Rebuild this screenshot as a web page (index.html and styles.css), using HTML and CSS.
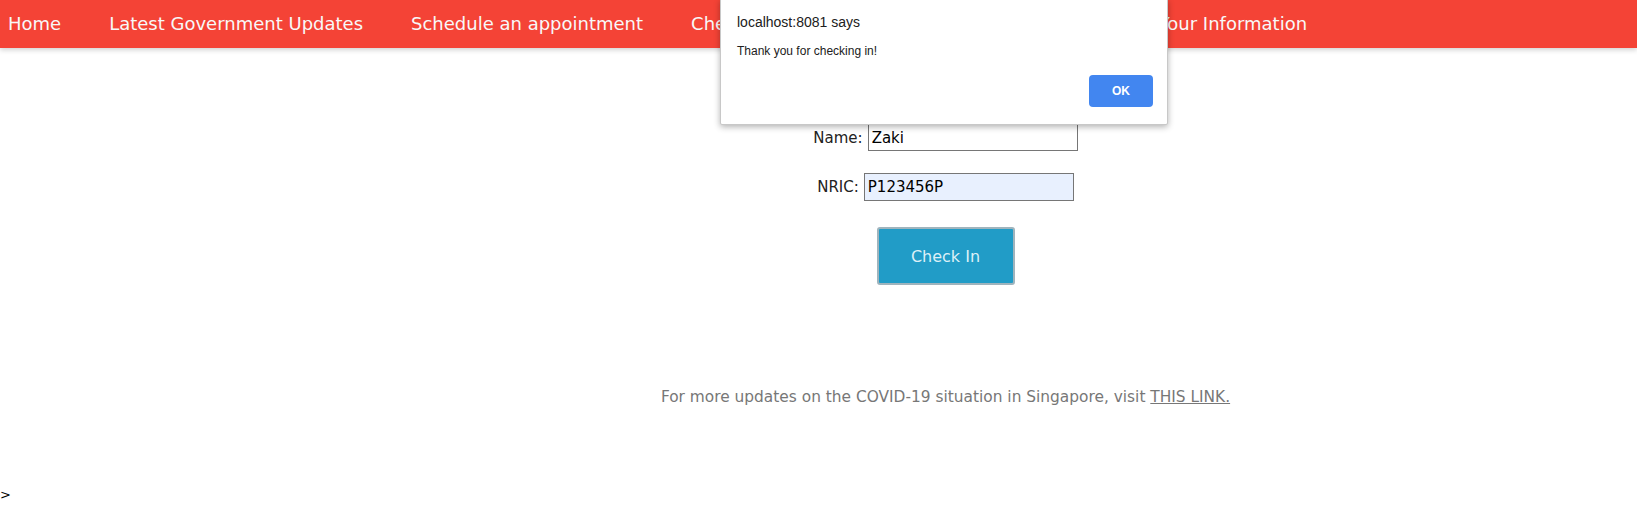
FILE: index.html
```html
<!DOCTYPE html>
<html lang="en">
<head>
<meta charset="utf-8">
<title>Check In</title>
<link rel="stylesheet" href="styles.css">
</head>
<body>
<nav class="topnav">
  <a href="#">Home</a>
  <a href="#">Latest Government Updates</a>
  <a href="#">Schedule an appointment</a>
  <a href="#">Check In</a>
  <a href="#">View My Check In History</a>
  <a class="tight" href="#">Update Your Information</a>
</nav>

<main class="content">
  <h2 class="page-title">Check In</h2>
  <form class="checkin">
    <div class="row">
      <label class="label" for="name">Name:</label>
      <input class="field" id="name" type="text" value="Zaki">
    </div>
    <div class="row">
      <label class="label" for="nric">NRIC:</label>
      <input class="field autofill" id="nric" type="text" value="P123456P">
    </div>
    <button class="btn" type="button">Check In</button>
  </form>
  <p class="note">For more updates on the COVID-19 situation in Singapore, visit <a href="#">THIS LINK.</a></p>
</main>

<div class="stray">&gt;</div>

<div class="alert">
  <div class="alert-title">localhost:8081 says</div>
  <div class="alert-msg">Thank you for checking in!</div>
  <div class="alert-actions"><button class="alert-ok" type="button">OK</button></div>
</div>
</body>
</html>
```

FILE: styles.css
```css
html, body {
  margin: 0;
  padding: 0;
  background: #fff;
}

body {
  font-family: "DejaVu Sans", Verdana, sans-serif;
  color: #222;
  height: 524px;
  overflow: hidden;
  position: relative;
}

.topnav {
  display: flex;
  gap: 48px;
  height: 48px;
  padding-left: 8px;
  background: #f44336;
  box-shadow: 0 2px 5px rgba(0, 0, 0, 0.18);
}

.topnav a {
  color: #f8f8f8;
  text-decoration: none;
  font-size: 18px;
  line-height: 47px;
  white-space: nowrap;
}

.topnav a.tight {
  margin-left: -5px;
}

.content {
  padding-left: 254px;
  display: flex;
  flex-direction: column;
  align-items: center;
}

.page-title {
  margin: 0;
  height: 76px;
  line-height: 60px;
  font-size: 24px;
  font-weight: normal;
}

.checkin {
  display: flex;
  flex-direction: column;
  align-items: center;
}

.row {
  display: flex;
  align-items: center;
  gap: 5px;
  margin-bottom: 22px;
}

.label {
  font-size: 15px;
  color: #222;
}

.field {
  width: 210px;
  height: 27px;
  box-sizing: border-box;
  border: 1px solid #767676;
  padding: 0 3px;
  font-family: "DejaVu Sans", Verdana, sans-serif;
  font-size: 15px;
  color: #000;
  background: #fff;
  margin: 0;
}

.field.autofill {
  background: #e8f0fe;
  height: 28px;
}

.btn {
  margin-top: 4px;
  width: 138px;
  height: 58px;
  background: #219cc7;
  border: 2px solid #9fb4bd;
  border-radius: 3px;
  color: #dcf0f7;
  font-family: "DejaVu Sans", Verdana, sans-serif;
  font-size: 16px;
}

.note {
  margin: 103px 0 0;
  font-size: 15.4px;
  color: #777;
}

.note a {
  color: #777;
}

.stray {
  position: absolute;
  left: 0;
  top: 487px;
  font-size: 13px;
  color: #000;
}

.alert {
  position: absolute;
  left: 720px;
  top: -1px;
  width: 448px;
  height: 126px;
  box-sizing: border-box;
  background: #fff;
  border: 1px solid #c8c8c8;
  border-radius: 0 0 2px 2px;
  box-shadow: 0 2px 6px rgba(0, 0, 0, 0.3);
  padding: 13px 14px 0 16px;
  font-family: "Liberation Sans", Arial, sans-serif;
}

.alert-title {
  font-size: 14px;
  color: #202020;
  line-height: 18px;
}

.alert-msg {
  margin-top: 12px;
  font-size: 12px;
  color: #202020;
  line-height: 16px;
}

.alert-actions {
  display: flex;
  justify-content: flex-end;
  margin-top: 16px;
}

.alert-ok {
  width: 64px;
  height: 32px;
  border: none;
  border-radius: 4px;
  background: #4286f0;
  color: #fff;
  font-family: "Liberation Sans", Arial, sans-serif;
  font-weight: bold;
  font-size: 12px;
}
```
